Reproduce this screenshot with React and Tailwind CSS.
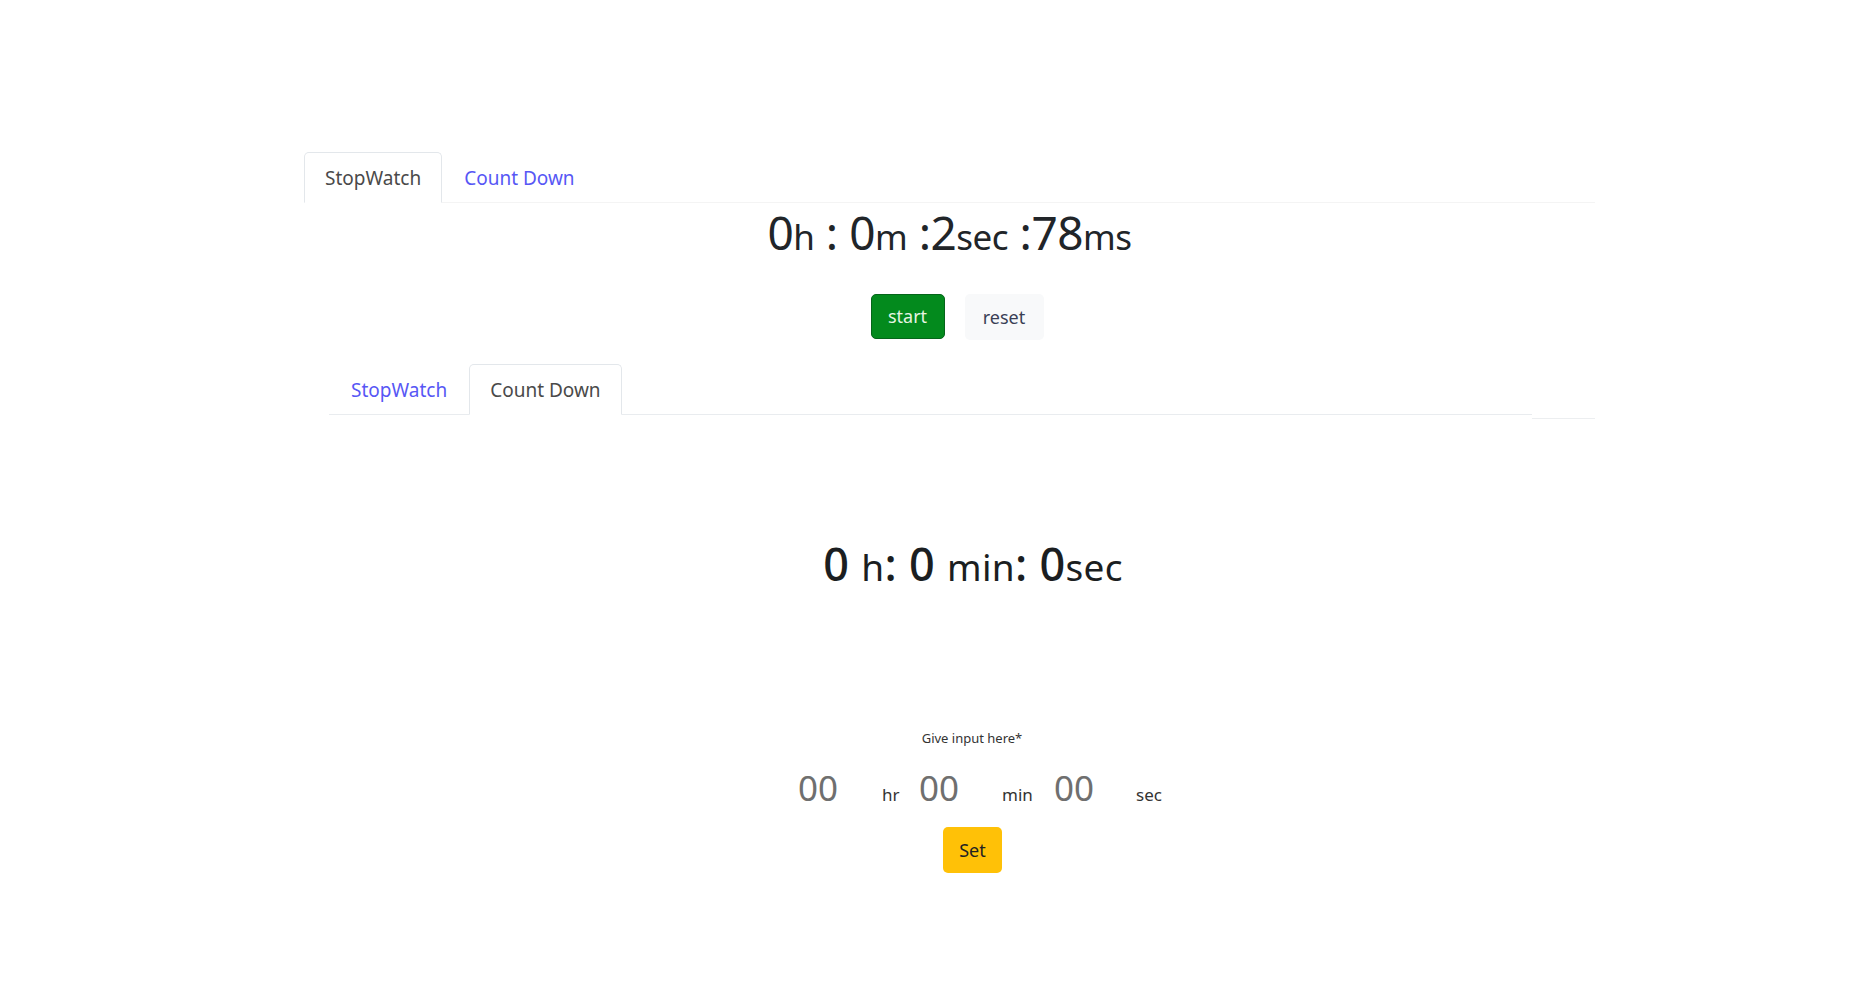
import { useState } from 'react'

const FONT = { fontFamily: '"Noto Sans", "Open Sans", sans-serif' }

function Tabs({ active, onChange, line }) {
  const tabs = ['StopWatch', 'Count Down']
  return (
    <div className={`flex border-b ${line}`}>
      {tabs.map((t) => (
        <button
          key={t}
          type="button"
          onClick={() => onChange(t)}
          className={`-mb-px h-[51px] rounded-t-[5px] border text-[19px] leading-[48px] ${
            t === active
              ? 'border-[#e3e7eb] border-b-white bg-white px-[20px] text-[#4a4a4a]'
              : 'border-transparent px-[21px] text-[#5757f5]'
          }`}
        >
          {t}
        </button>
      ))}
    </div>
  )
}

export default function App() {
  const [top, setTop] = useState('StopWatch')
  const [bottom, setBottom] = useState('Count Down')

  return (
    <div className="min-h-[993px] bg-white text-[#212529]" style={FONT}>
      <div className="ml-[304px] w-[1291px] pt-[152px]">
        <Tabs active={top} onChange={setTop} line="border-[#f4f4f4]" />

        <div className="text-center text-[46px] leading-[58px] tracking-[-0.5px]">
          0<span className="text-[35px]">h</span> : 0<span className="text-[35px]">m</span> :2
          <span className="text-[35px]">sec</span> :78<span className="text-[35px]">ms</span>
        </div>

        <div className="mt-[28px] flex justify-center gap-[20px] pl-[15px]">
          <button
            type="button"
            className="h-[45px] w-[74px] rounded-[5px] border border-[#05651a] bg-[#038a1d] text-[18px] text-[#e6f5e3]"
          >
            start
          </button>
          <button
            type="button"
            className="h-[46px] w-[79px] rounded-[5px] bg-[#f8f9fa] text-[18px] text-[#3a3f55]"
          >
            reset
          </button>
        </div>

        <div className="mt-[24px] ml-[25px] w-[1203px]">
          <Tabs active={bottom} onChange={setBottom} line="border-[#e9ecef]" />
        </div>
        <div className="mt-[3px] flex justify-end">
          <div className="h-px w-[63px] bg-[#eceef0]" />
        </div>

        <div className="mt-[118px] pl-[47px] text-center text-[45px] font-medium leading-[54px] tracking-[0.3px] text-[#1b1e21]">
          0 <span className="text-[37px] font-normal">h</span>: 0 <span className="text-[37px] font-normal">min</span>: 0
          <span className="text-[37px] font-normal">sec</span>
        </div>

        <div className="mt-[134px] pl-[45px] text-center text-[13px] leading-[20px] text-[#333]">Give input here*</div>

        <div className="mt-[18px] flex items-baseline justify-center pl-[64px]">
          {[
            ['hr', 'w-[84px]', 'w-[37px]'],
            ['min', 'w-[83px]', 'w-[52px]'],
            ['sec', 'w-[82px]', 'w-[29px]'],
          ].map(([label, iw, lw]) => (
            <div key={label} className="flex items-baseline">
              <input
                placeholder="00"
                className={`${iw} h-[44px] bg-transparent p-0 text-[35px] leading-[44px] text-[#555] outline-none placeholder:text-[#6f6f6f]`}
                style={FONT}
              />
              <span className={`${lw} text-[17px] text-[#333]`}>{label}</span>
            </div>
          ))}
        </div>

        <div className="mt-[17px] flex justify-center pl-[46px]">
          <button
            type="button"
            className="h-[46px] w-[59px] rounded-[5px] bg-[#ffc107] text-[18px] text-[#222]"
          >
            Set
          </button>
        </div>
      </div>
    </div>
  )
}
